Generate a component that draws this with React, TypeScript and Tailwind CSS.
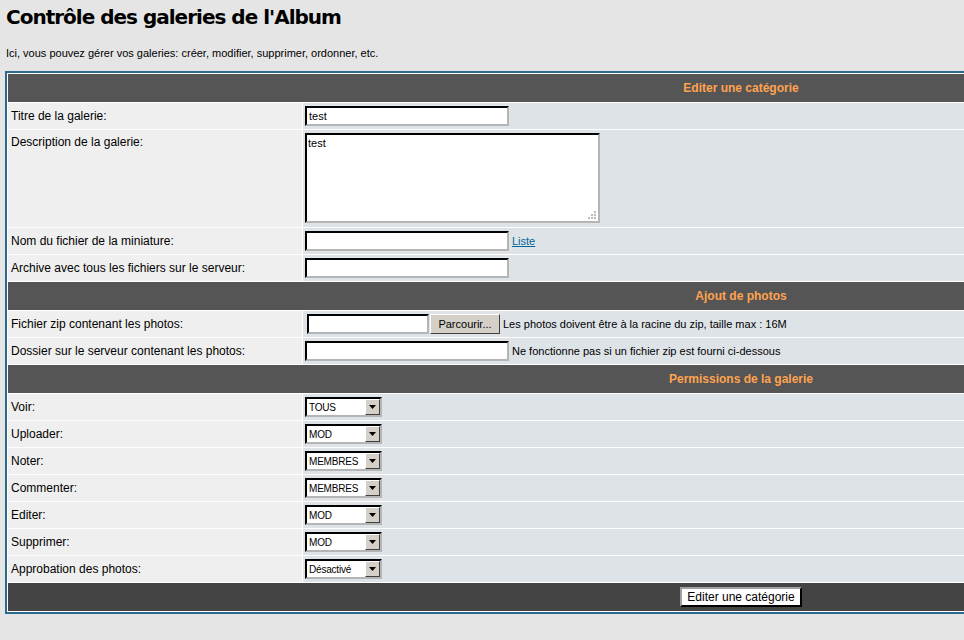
const font = "font-['Liberation_Sans',Arial,sans-serif]";

function Header({ title }: { title: string }) {
  return (
    <div className="h-[28px] bg-[#555555] flex items-center justify-center text-[12px] font-bold text-[#ffa34f]">
      {title}
    </div>
  );
}

function Row({
  label,
  children,
  tall,
}: {
  label: string;
  children?: React.ReactNode;
  tall?: boolean;
}) {
  return (
    <div className={`flex gap-px ${tall ? 'h-[97px]' : 'h-[26px]'}`}>
      <div
        className={`w-[294px] shrink-0 bg-[#efefef] pl-[3px] text-[12px] flex ${
          tall ? 'items-start pt-[3px]' : 'items-center'
        }`}
      >
        {label}
      </div>
      <div
        className={`flex-1 bg-[#dee3e7] pl-[2px] flex gap-[3px] text-[11px] ${
          tall ? 'items-start pt-[3px]' : 'items-center'
        }`}
      >
        {children}
      </div>
    </div>
  );
}

function TextInput({ value = '', width = 'w-[204px]' }: { value?: string; width?: string }) {
  return (
    <div
      className={`${width} h-[20px] bg-white border-2 border-t-black border-l-black border-r-[#b5b5b5] border-b-[#b5b5b5] flex items-center pl-[2px] text-[11px]`}
    >
      {value}
    </div>
  );
}

function Select({ value }: { value: string }) {
  return (
    <div className="w-[77px] h-[20px] bg-white border-2 border-t-black border-l-black border-r-[#b5b5b5] border-b-[#b5b5b5] flex items-center justify-between pl-[2px] text-[10px] tracking-[-0.2px]">
      <span>{value}</span>
      <div className="w-[15px] h-[16px] shrink-0 bg-[#d4d0c8] border border-t-white border-l-white border-r-[#404040] border-b-[#404040] flex items-center justify-center">
        <svg width="7" height="4" viewBox="0 0 7 4">
          <path d="M0 0h7L3.5 4z" fill="#000" />
        </svg>
      </div>
    </div>
  );
}

export default function App() {
  const perms: [string, string][] = [
    ['Voir:', 'TOUS'],
    ['Uploader:', 'MOD'],
    ['Noter:', 'MEMBRES'],
    ['Commenter:', 'MEMBRES'],
    ['Editer:', 'MOD'],
    ['Supprimer:', 'MOD'],
    ['Approbation des photos:', 'Désactivé'],
  ];

  return (
    <div className={`min-h-screen w-full overflow-hidden bg-[#e5e5e5] text-black ${font}`}>
      <h1 className="ml-[6px] mt-[3px] text-[20px] leading-[28px] font-bold font-['DejaVu_Sans',sans-serif] tracking-[-1px]">
        Contrôle des galeries de l'Album
      </h1>
      <p className="ml-[6px] mt-[15px] text-[11px] leading-[14px]">
        Ici, vous pouvez gérer vos galeries: créer, modifier, supprimer, ordonner, etc.
      </p>

      <div className="mt-[11px] ml-[5px] w-[1472px] border-2 border-[#2a6a8e] bg-white p-px flex flex-col gap-px">
        <Header title="Editer une catégorie" />
        <Row label="Titre de la galerie:">
          <TextInput value="test" />
        </Row>
        <Row label="Description de la galerie:" tall>
          <div className="relative w-[295px] h-[90px] bg-white border-2 border-t-black border-l-black border-r-[#b5b5b5] border-b-[#b5b5b5] pl-[1px] text-[11px]">
            test
            <svg className="absolute right-[2px] bottom-[2px]" width="8" height="8" viewBox="0 0 8 8">
              <rect x="6" y="0" width="2" height="2" fill="#bbb" />
              <rect x="3" y="3" width="2" height="2" fill="#bbb" />
              <rect x="6" y="3" width="2" height="2" fill="#bbb" />
              <rect x="0" y="6" width="2" height="2" fill="#bbb" />
              <rect x="3" y="6" width="2" height="2" fill="#bbb" />
              <rect x="6" y="6" width="2" height="2" fill="#bbb" />
            </svg>
          </div>
        </Row>
        <Row label="Nom du fichier de la miniature:">
          <TextInput />
          <a href="#" className="text-[11px] text-[#006699] underline">
            Liste
          </a>
        </Row>
        <Row label="Archive avec tous les fichiers sur le serveur:">
          <TextInput />
        </Row>

        <Header title="Ajout de photos" />
        <Row label="Fichier zip contenant les photos:">
          <div className="flex items-center ml-[2px] gap-[1px]">
            <TextInput width="w-[122px]" />
            <div className="h-[20px] w-[70px] bg-[#d4d0c8] border border-t-white border-l-white border-r-[#404040] border-b-[#404040] flex items-center justify-center text-[11px]">
              Parcourir...
            </div>
          </div>
          <span>Les photos doivent être à la racine du zip, taille max : 16M</span>
        </Row>
        <Row label="Dossier sur le serveur contenant les photos:">
          <TextInput />
          <span>Ne fonctionne pas si un fichier zip est fourni ci-dessous</span>
        </Row>

        <Header title="Permissions de la galerie" />
        {perms.map(([label, value]) => (
          <Row key={label} label={label}>
            <Select value={value} />
          </Row>
        ))}

        <div className="h-[28px] bg-[#444444] flex items-center justify-center">
          <div className="h-[20px] px-[5px] bg-white border-2 border-t-[#a0a0a0] border-l-[#a0a0a0] border-r-black border-b-black flex items-center text-[12px]">
            Editer une catégorie
          </div>
        </div>
      </div>
    </div>
  );
}
